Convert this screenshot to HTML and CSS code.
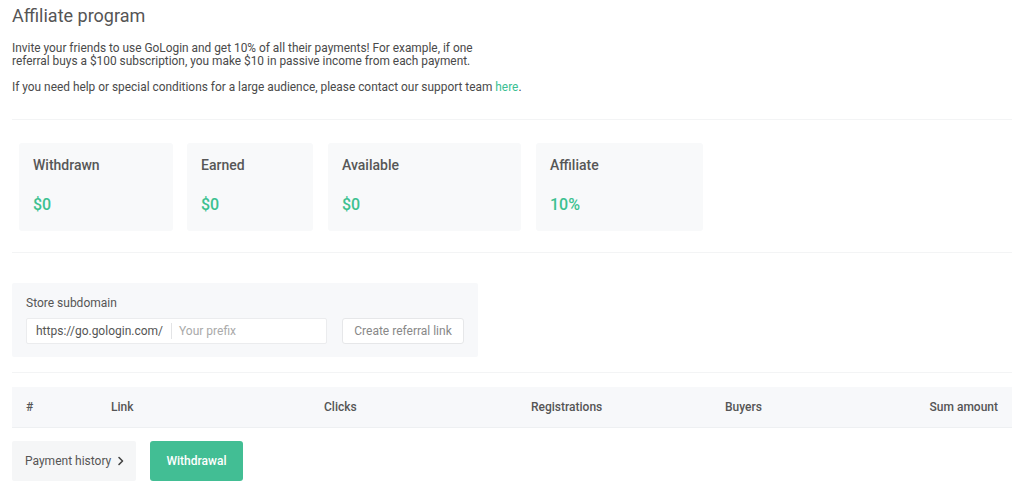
FILE: index.html
```html
<!DOCTYPE html>
<html lang="en">
<head>
<meta charset="utf-8">
<title>Affiliate program</title>
<link rel="stylesheet" href="styles.css">
</head>
<body>
<main class="page">
  <h1 class="title">Affiliate program</h1>
  <p class="intro intro-first">Invite your friends to use GoLogin and get 10% of all their payments! For example, if one referral buys a $100 subscription, you make $10 in passive income from each payment.</p>
  <p class="intro intro-second">If you need help or special conditions for a large audience, please contact our support team <a class="link" href="#">here</a>.</p>
  <hr class="sep sep-first">
  <section class="cards">
    <div class="card card-w1"><div class="card-label">Withdrawn</div><div class="card-value">$0</div></div>
    <div class="card card-w2"><div class="card-label">Earned</div><div class="card-value">$0</div></div>
    <div class="card card-w3"><div class="card-label">Available</div><div class="card-value">$0</div></div>
    <div class="card card-w4"><div class="card-label">Affiliate</div><div class="card-value">10%</div></div>
  </section>
  <hr class="sep sep-second">
  <section class="subdomain">
    <div class="sub-label">Store subdomain</div>
    <div class="sub-row">
      <div class="input-group">
        <span class="prefix">https://go.gologin.com/</span>
        <span class="placeholder">Your prefix</span>
      </div>
      <button class="btn-create">Create referral link</button>
    </div>
  </section>
  <hr class="sep sep-third">
  <div class="table-head">
    <div class="th">#</div>
    <div class="th">Link</div>
    <div class="th">Clicks</div>
    <div class="th">Registrations</div>
    <div class="th">Buyers</div>
    <div class="th th-right">Sum amount</div>
  </div>
  <div class="actions">
    <button class="btn-history">Payment history
      <svg class="chev" width="8" height="10" viewBox="0 0 8 10"><path d="M2 1.5 L5.5 5 L2 8.5" fill="none" stroke="#444" stroke-width="1.6" stroke-linecap="round" stroke-linejoin="round"/></svg>
    </button>
    <button class="btn-withdraw">Withdrawal</button>
  </div>
</main>
</body>
</html>
```
FILE: styles.css
```css
* { box-sizing: border-box; }
html, body { margin: 0; padding: 0; background: #fff; }
body { font-family: Roboto, "Noto Sans", Arial, sans-serif; color: #444; }
.page { padding: 0 12px; width: 1024px; }
.title { margin: 0; padding-top: 6px; font-size: 18px; font-weight: 400; line-height: 20px; color: #555; }
.intro { margin: 0; font-size: 11.88px; line-height: 13px; color: #4a4a4a; }
.intro-first { margin-top: 16px; max-width: 490px; }
.intro-second { margin-top: 13px; }
.link { color: #3cbf93; text-decoration: none; }
.sep { border: 0; height: 1px; background: #f3f4f5; margin: 0; }
.sep-first { margin-top: 25px; }
.cards { display: flex; margin-top: 23px; }
.card { background: #f8f9fa; border-radius: 3px; height: 88px; margin: 0 7px; padding: 14px 14px 0; }
.card-w1 { width: 154px; }
.card-w2 { width: 126px; margin-left: 7px; }
.card-w3 { width: 193px; margin-left: 8px; }
.card-w4 { width: 167px; margin-left: 8px; }
.card-label { font-size: 14px; font-weight: 500; line-height: 16px; color: #575757; }
.card-value { margin-top: 23px; font-size: 16px; font-weight: 500; line-height: 18px; color: #3cc190; }
.sep-second { margin-top: 21px; }
.subdomain { margin-top: 30px; width: 466px; height: 74px; background: #f7f8fa; border-radius: 2px; padding: 13px 14px; }
.sub-label { font-size: 12px; line-height: 14px; color: #555; }
.sub-row { display: flex; gap: 15px; margin-top: 8px; }
.input-group { display: flex; align-items: center; width: 301px; height: 26px; background: #fff; border: 1px solid #ebecee; border-radius: 2px; font-size: 12px; }
.prefix { padding: 0 8px 0 9px; color: #555; border-right: 1px solid #e3e4e6; line-height: 16px; }
.placeholder { padding-left: 7px; color: #aaa; }
.btn-create { width: 122px; height: 26px; background: #fff; border: 1px solid #e6e7e9; border-radius: 3px; font-family: inherit; font-size: 12px; color: #888; padding: 0; }
.sep-third { margin-top: 15px; }
.table-head { display: grid; grid-template-columns: 85px 213px 207px 194px 150px 1fr; align-items: center; margin-top: 14px; height: 41px; background: #f7f8fa; border-bottom: 1px solid #eef0f2; }
.th { padding: 0 14px; font-size: 12px; font-weight: 500; color: #555; white-space: nowrap; }
.th-right { text-align: right; }
.actions { display: flex; gap: 14px; margin-top: 13px; }
.btn-history { display: flex; align-items: center; gap: 6px; width: 124px; height: 40px; background: #f5f6f7; border: 0; border-radius: 2px; padding: 0 0 0 13px; font-family: inherit; font-size: 12px; color: #555; }
.chev { margin-top: -1px; }
.btn-withdraw { width: 93px; height: 40px; background: #42be94; border: 0; border-radius: 3px; font-family: inherit; font-size: 12px; font-weight: 500; color: #fff; padding: 0; }
```
